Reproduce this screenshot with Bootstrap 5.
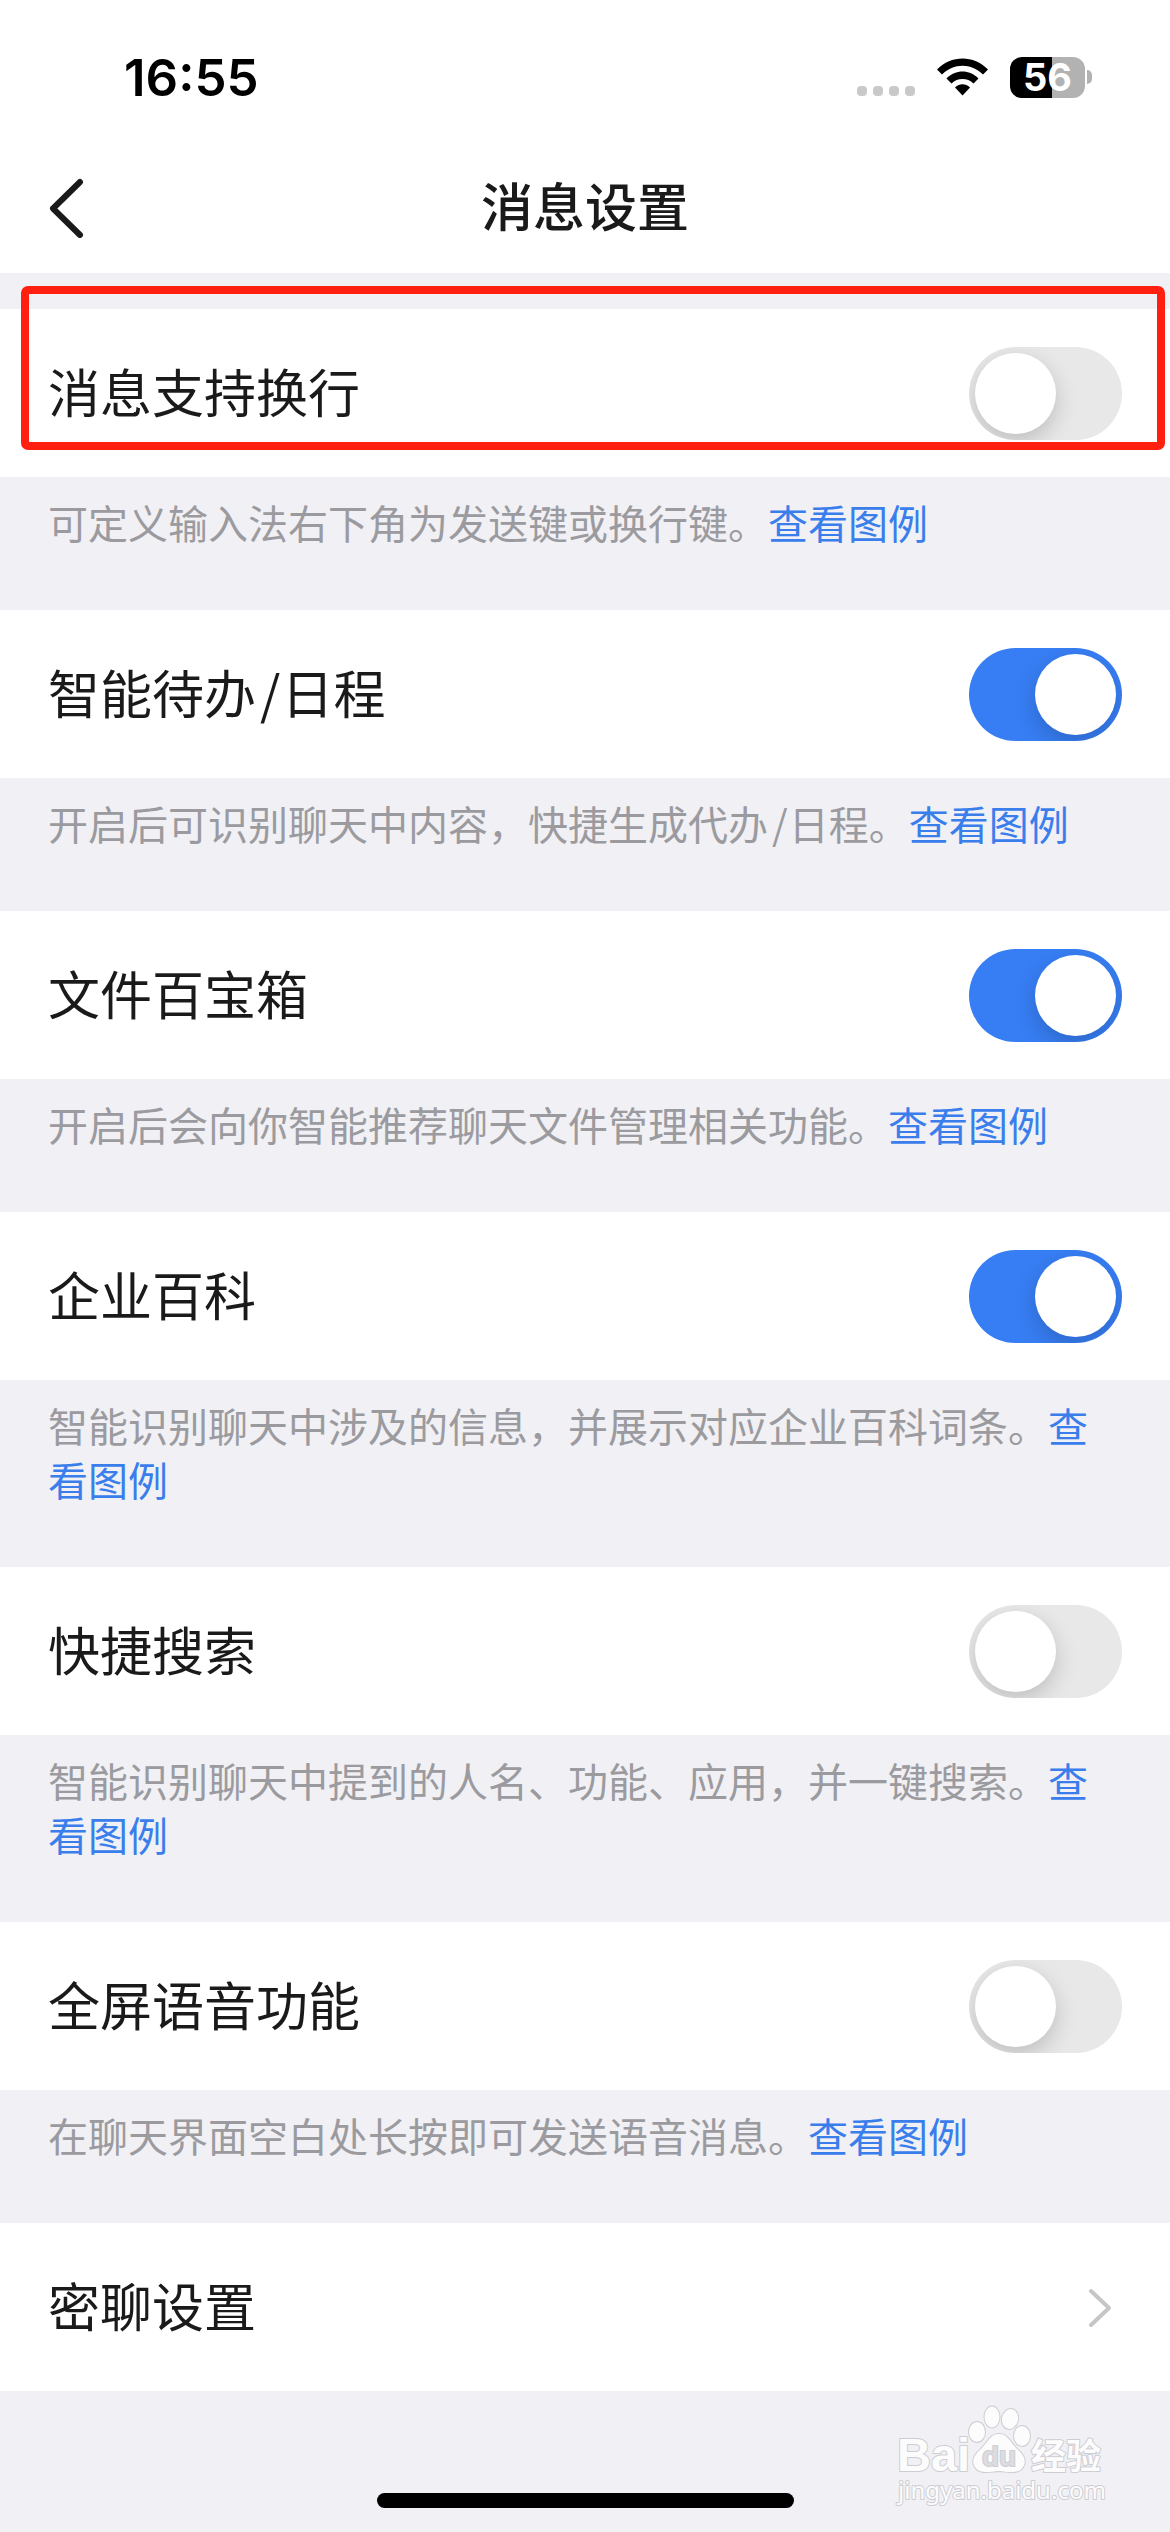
<!DOCTYPE html>
<html lang="zh-CN">
<head>
<meta charset="utf-8">
<meta name="viewport" content="width=device-width, initial-scale=1">
<title>消息设置</title>
<link href="https://cdn.jsdelivr.net/npm/bootstrap@5.3.0/dist/css/bootstrap.min.css" rel="stylesheet">
<style>
  body { font-family: "Noto Sans CJK SC", sans-serif; background: #f0f0f5; color: #1a1a1a; }
  .status-bar { height: 143px; padding: 0 78px 0 124px; color: #000; font-family: Inter, sans-serif; }
  .clock { font-size: 51px; line-height: 60px; font-weight: 600; margin-top: 48px; }
  .status-icons { margin-top: 57px; height: 41px; }
  .signal { gap: 6px; margin: 0 22px 2px 0; }
  .signal i { width: 10px; height: 10px; border-radius: 4px; background: #c9c9c9; }
  .wifi { margin: 0 22px 2px 0; }
  .battery { width: 75px; height: 41px; border-radius: 12px; background: linear-gradient(90deg, #000 56%, #b2b2b2 56%); color: #fff; font-size: 38px; line-height: 41px; font-weight: 700; }
  .battery-tip { width: 5px; height: 14px; margin: 0 0 14px 2px; border-radius: 0 5px 5px 0; background: #b2b2b2; }
  .title-bar { height: 130px; padding: 0 48px; }
  .title-bar h1 { font-size: 52px; line-height: 60px; font-weight: 500; padding-bottom: 6px; }
  .side-slot { width: 60px; }
  .back { line-height: 1; color: #1a1a1a; }
  .settings { padding-top: 36px; }
  .setting-row { height: 168px; padding: 0 48px; font-size: 52px; line-height: 60px; color: #1a1a1a; }
  .hint { padding: 18px 48px 61px; font-size: 40px; line-height: 54px; color: #9b9b9f; }
  .hint a { color: #3a7eec; text-decoration: none; }
  .slash { margin: 0 1px 0 4px; }
  .form-switch .form-check-input.toggle { width: 153px; height: 93px; margin: 0; border: 0; border-radius: 47px; background: #e8e8e8; overflow: hidden; }
  .toggle::before { content: ""; display: block; width: 81px; height: 81px; margin: 6px; border-radius: 50%; background: #fff; box-shadow: 0 8px 22px rgba(0, 0, 0, .18); }
  .form-switch .form-check-input.toggle:checked { background: #377ef4; }
  .toggle:checked::before { margin-left: 66px; }
  .highlight { top: 13px; left: 21px; right: 5px; height: 164px; border: 8px solid #ff2010; border-radius: 7px; pointer-events: none; }
  .bottom-area { min-height: 141px; padding-bottom: 24px; }
  .home-bar { width: 417px; height: 15px; border-radius: 8px; background: #000; }
  .watermark { right: 58px; bottom: 20px; }
</style>
</head>
<body>
<div class="d-flex flex-column min-vh-100">
  <header class="bg-white">
    <div class="status-bar d-flex justify-content-between align-items-start">
      <time class="clock">16:55</time>
      <div class="status-icons d-flex align-items-end">
        <div class="signal d-flex"><i></i><i></i><i></i><i></i></div>
        <svg class="wifi" width="51" height="38" viewBox="0 0 51 38" aria-label="Wi-Fi">
          <path d="M0 11.500C14-3.300 37-3.300 51 11.500L46 16.500C34.500 4.900 16.500 4.900 5 16.500Z"/>
          <path d="M9.500 20.500C18.500 11.300 32.500 11.300 41.500 20.500L36.500 25.500C30.500 19.600 20.500 19.600 14.500 25.500Z"/>
          <path d="M18 29.500C22.500 25.300 28.500 25.300 33 29.500L25.500 37.500Z"/>
        </svg>
        <div class="battery text-center">56</div>
        <div class="battery-tip"></div>
      </div>
    </div>
    <nav class="title-bar d-flex align-items-center justify-content-between">
      <div class="side-slot">
        <button type="button" class="back btn p-0 border-0 d-block" aria-label="返回">
          <svg class="d-block" width="36" height="60" viewBox="0 0 36 60" fill="none" stroke="currentColor" stroke-width="6" stroke-linecap="round" stroke-linejoin="round"><path d="M32 4L5 30.500L32 57"/></svg>
        </button>
      </div>
      <h1 class="m-0">消息设置</h1>
      <div class="side-slot"></div>
    </nav>
  </header>

  <main class="settings position-relative">
    <div class="form-switch setting-row bg-white d-flex align-items-center justify-content-between">
      <label class="pb-1" for="wrap">消息支持换行</label>
      <input class="form-check-input toggle" type="checkbox" role="switch" id="wrap">
    </div>
    <p class="hint m-0">可定义输入法右下角为发送键或换行键。<a href="#">查看图例</a></p>

    <div class="form-switch setting-row bg-white d-flex align-items-center justify-content-between">
      <label class="pb-1" for="todo">智能待办<span class="slash">/</span>日程</label>
      <input class="form-check-input toggle" type="checkbox" role="switch" id="todo" checked>
    </div>
    <p class="hint m-0">开启后可识别聊天中内容，快捷生成代办<span class="slash">/</span>日程。<a href="#">查看图例</a></p>

    <div class="form-switch setting-row bg-white d-flex align-items-center justify-content-between">
      <label class="pb-1" for="files">文件百宝箱</label>
      <input class="form-check-input toggle" type="checkbox" role="switch" id="files" checked>
    </div>
    <p class="hint m-0">开启后会向你智能推荐聊天文件管理相关功能。<a href="#">查看图例</a></p>

    <div class="form-switch setting-row bg-white d-flex align-items-center justify-content-between">
      <label class="pb-1" for="wiki">企业百科</label>
      <input class="form-check-input toggle" type="checkbox" role="switch" id="wiki" checked>
    </div>
    <p class="hint m-0">智能识别聊天中涉及的信息，并展示对应企业百科词条。<a href="#">查看图例</a></p>

    <div class="form-switch setting-row bg-white d-flex align-items-center justify-content-between">
      <label class="pb-1" for="search">快捷搜索</label>
      <input class="form-check-input toggle" type="checkbox" role="switch" id="search">
    </div>
    <p class="hint m-0">智能识别聊天中提到的人名、功能、应用，并一键搜索。<a href="#">查看图例</a></p>

    <div class="form-switch setting-row bg-white d-flex align-items-center justify-content-between">
      <label class="pb-1" for="voice">全屏语音功能</label>
      <input class="form-check-input toggle" type="checkbox" role="switch" id="voice">
    </div>
    <p class="hint m-0">在聊天界面空白处长按即可发送语音消息。<a href="#">查看图例</a></p>

    <a href="#" class="setting-row bg-white d-flex align-items-center justify-content-between text-decoration-none">
      <span class="pb-1">密聊设置</span>
      <svg width="34" height="40" viewBox="0 0 34 40" fill="none" stroke="#c6c6c6" stroke-width="4" stroke-linecap="round" stroke-linejoin="round"><path d="M3 4L21 21L3 38"/></svg>
    </a>
    <div class="highlight position-absolute"></div>
  </main>

  <footer class="bottom-area position-relative flex-grow-1 d-flex align-items-end justify-content-center">
    <div class="home-bar"></div>
    <svg class="watermark position-absolute" width="220" height="110" viewBox="0 0 220 110" fill="#fcfcfd" stroke="#cdcdd2" stroke-width="2" stroke-linejoin="round" paint-order="stroke" aria-label="Baidu 经验">
      <text x="5" y="69" font-family="Liberation Sans, sans-serif" font-weight="700" font-size="47">Bai</text>
      <ellipse cx="85" cy="30" rx="8" ry="10"/>
      <ellipse cx="100" cy="15" rx="7.500" ry="10.500"/>
      <ellipse cx="118" cy="17" rx="8" ry="10" transform="rotate(12 118 17)"/>
      <ellipse cx="130" cy="34" rx="8" ry="10"/>
      <path d="M107 32C116 32 118 40 125 47C132 53 135 59 131 65C127 72 117 70 107 69C97 70 87 72 83 65C79 59 82 53 89 47C96 40 98 32 107 32Z"/>
      <text x="90" y="64" font-family="Liberation Sans, sans-serif" font-weight="700" font-size="28" fill="#dcdce1">du</text>
      <text x="139" y="67" font-family="Noto Sans CJK SC, sans-serif" font-weight="700" font-size="35">经验</text>
      <text x="6" y="97" font-family="Noto Sans, sans-serif" font-size="24">jingyan.baidu.com</text>
    </svg>
  </footer>
</div>
<script src="https://cdn.jsdelivr.net/npm/bootstrap@5.3.0/dist/js/bootstrap.bundle.min.js"></script>
</body>
</html>
